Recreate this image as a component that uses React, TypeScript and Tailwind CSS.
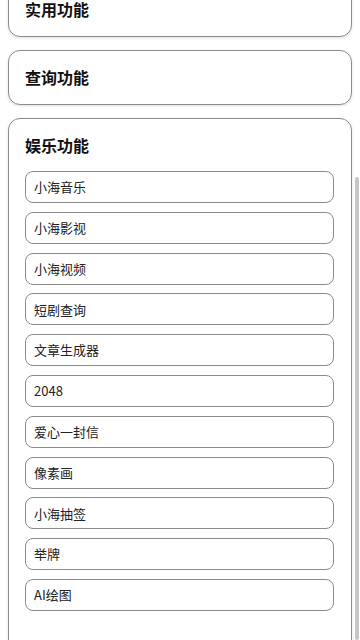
import React from 'react';

const items = ['小海音乐', '小海影视', '小海视频', '短剧查询', '文章生成器', '2048', '爱心一封信', '像素画', '小海抽签', '举牌', 'AI绘图'];

const font = { fontFamily: '"Noto Sans CJK SC", "Noto Sans", sans-serif' };

const Card = ({ title, children }: { title: string; children?: React.ReactNode }) => (
  <div className="rounded-xl border border-[#8c8c8c] bg-white pl-4 pr-[17px] pt-[14px] pb-[15px] shadow-[0_1px_3px_rgba(0,0,0,0.12)]">
    <h2 className="text-[16px] font-bold leading-6 text-[#111]">{title}</h2>
    {children}
  </div>
);

export default function App() {
  return (
    <div className="relative h-[640px] overflow-hidden bg-white" style={font}>
      <div className="mt-[-18px] flex flex-col gap-[13px] px-2">
        <Card title="实用功能" />
        <Card title="查询功能" />
        <Card title="娱乐功能">
          <div className="mt-[14px] flex flex-col gap-[8.8px] pb-6">
            {items.map((t) => (
              <div key={t} className="flex h-[32px] items-center rounded-lg border border-[#8c8c8c] bg-white pl-2 text-[13px] text-[#222]">
                {t}
              </div>
            ))}
          </div>
        </Card>
      </div>
      <div className="absolute right-[1px] top-[177px] bottom-0 w-[4px] rounded-full bg-[#c6c6c6]" />
    </div>
  );
}
